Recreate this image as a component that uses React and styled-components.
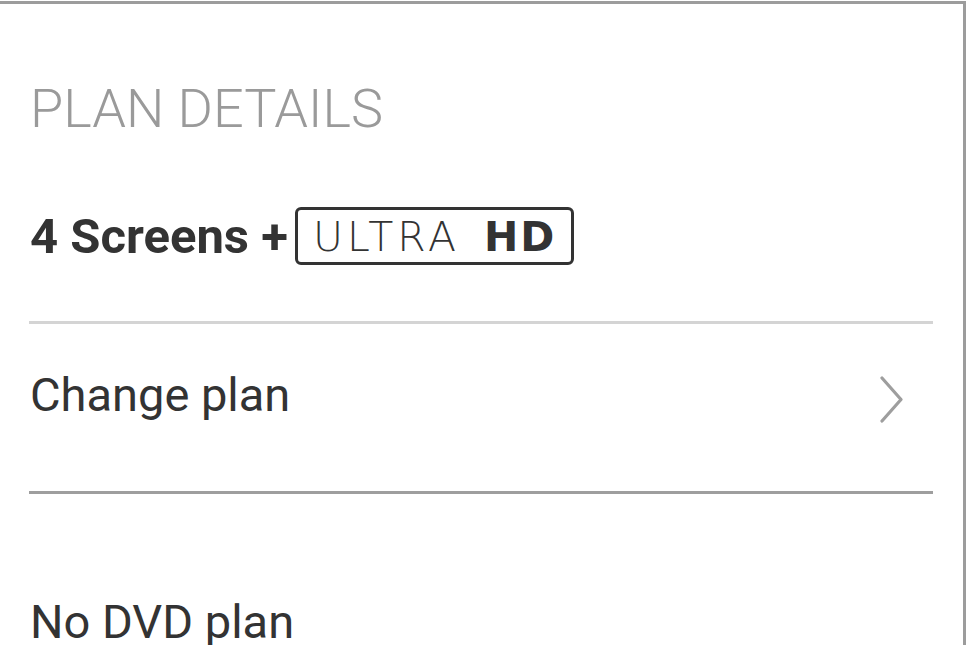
import React from "react";
import styled, { createGlobalStyle } from "styled-components";

const GlobalStyles = createGlobalStyle`
  * {
    box-sizing: border-box;
    margin: 0;
    padding: 0;
  }
  body {
    font-family: Roboto, "Liberation Sans", sans-serif;
    background: #fff;
    color: #333;
  }
`;

const Panel = styled.section`
  width: 966px;
  height: 644px;
  margin-top: 1px;
  border-top: 3px solid #9c9c9c;
  border-right: 3px solid #9c9c9c;
  padding: 0 30px 0 29px;
  overflow: hidden;
`;

const Title = styled.h2`
  margin-top: 78px;
  padding-left: 1px;
  font-size: 54px;
  line-height: 54px;
  font-weight: 300;
  color: #9a9a9a;
`;

const PlanRow = styled.div`
  display: flex;
  align-items: center;
  gap: 7px;
  height: 58px;
  margin-top: 71px;
  padding-left: 1px;
`;

const PlanName = styled.span`
  font-size: 49px;
  line-height: 49px;
  font-weight: 700;
  color: #333;
`;

const QualityBadge = styled.span`
  display: flex;
  align-items: center;
  height: 58px;
  padding: 2px 17px 0 15px;
  border: 3px solid #333;
  border-radius: 6px;
  font-family: "DejaVu Sans", sans-serif;
  font-size: 41px;
  line-height: 1;
  color: #333;
`;

const Ultra = styled.span`
  font-weight: 200;
  letter-spacing: 4px;
  margin-right: 24px;
`;

const Hd = styled.span`
  font-weight: 700;
  letter-spacing: 2px;
  margin-right: -2px;
`;

const Divider = styled.hr`
  border: 0;
  height: 3px;
  background: ${({ $strong }) => ($strong ? "#9e9e9e" : "#d4d4d4")};
  margin-top: ${({ $top }) => $top}px;
`;

const LinkRow = styled.a`
  display: flex;
  justify-content: space-between;
  align-items: flex-start;
  padding: 47px 30px 68px 1px;
  color: #333;
  text-decoration: none;
`;

const RowLabel = styled.span`
  font-size: 47px;
  line-height: 47px;
  font-weight: 400;
  color: #333;
`;

const Chevron = styled.svg`
  width: 23px;
  height: 47px;
  margin-top: 5px;
`;

const DvdRow = styled.div`
  margin-top: 104px;
  padding-left: 1px;
`;

const App = () => {
  return (
    <>
      <GlobalStyles />
      <Panel>
        <Title>PLAN DETAILS</Title>
        <PlanRow>
          <PlanName>4 Screens +</PlanName>
          <QualityBadge>
            <Ultra>ULTRA</Ultra>
            <Hd>HD</Hd>
          </QualityBadge>
        </PlanRow>
        <Divider $top={56} />
        <LinkRow href="#">
          <RowLabel>Change plan</RowLabel>
          <Chevron viewBox="0 0 23 47" fill="none">
            <path
              d="M2 2 L21 23.5 L2 45"
              stroke="#9e9e9e"
              strokeWidth="3.2"
              strokeLinecap="round"
              strokeLinejoin="round"
            />
          </Chevron>
        </LinkRow>
        <Divider $strong />
        <DvdRow>
          <RowLabel>No DVD plan</RowLabel>
        </DvdRow>
      </Panel>
    </>
  );
};

export default App;
